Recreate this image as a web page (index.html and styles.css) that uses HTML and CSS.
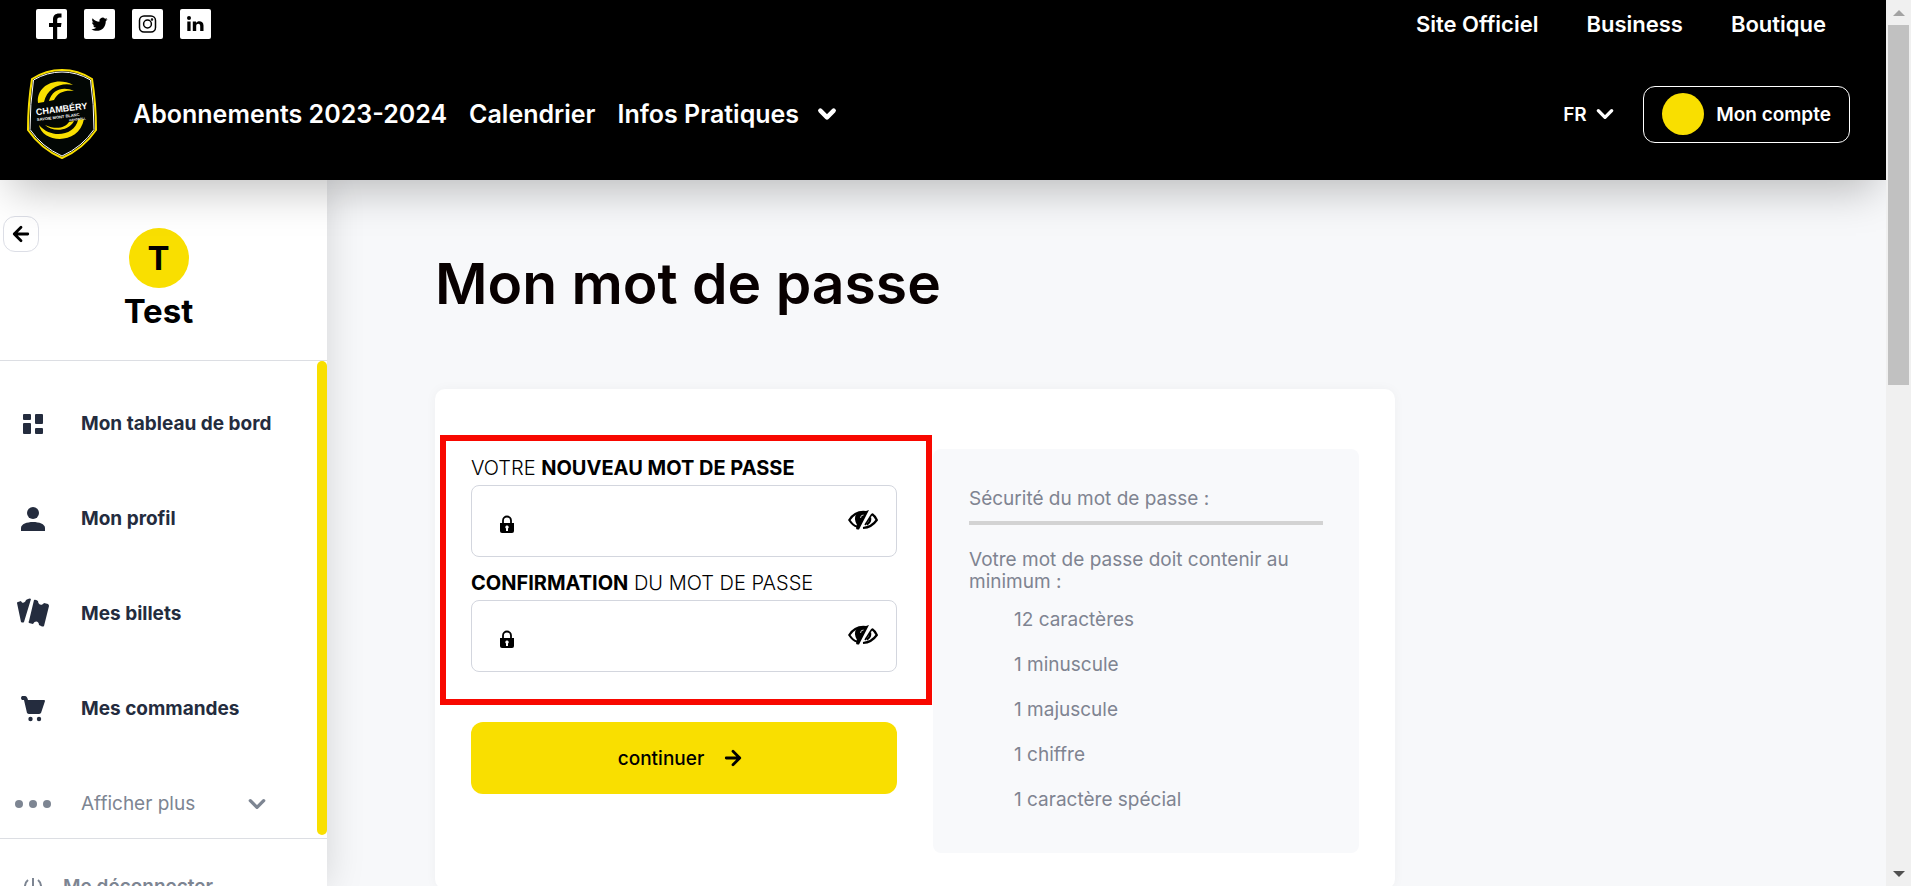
FILE: index.html
```html
<!DOCTYPE html>
<html lang="fr">
<head>
  <meta charset="UTF-8">
  <meta name="viewport" content="width=device-width, initial-scale=1">
  <title>Mon mot de passe</title>
  <link rel="stylesheet" href="styles.css">
</head>
<body>
  <div class="page">

    <!-- Header -->
    <header class="header">
      <div class="topbar">
        <div class="socials">
          <a href="#" class="social" aria-label="Facebook">
            <svg viewBox="0 0 31 30"><path d="M17 30V18h-4v-4h4v-3.500c0-4 2.300-6 6-6h2.500v4H23.500c-1.800 0-2.300 1-2.300 2.500v3h4.300l-.6 4h-3.700v12z"/></svg>
          </a>
          <a href="#" class="social" aria-label="Twitter">
            <svg viewBox="0 0 31 30"><path d="M23.600 10.200c-.6.300-1.200.4-1.900.5.700-.4 1.200-1 1.400-1.800-.6.400-1.300.6-2.100.8a3.300 3.300 0 0 0-5.600 3c-2.700-.1-5.200-1.500-6.800-3.500-.9 1.500-.4 3.400 1 4.400-.5 0-1-.2-1.500-.4 0 1.600 1.100 2.900 2.600 3.300-.5.100-1 .1-1.500 0 .4 1.300 1.600 2.300 3.100 2.300a6.600 6.600 0 0 1-4.900 1.400c5.800 3.700 14.400.9 14.400-8.300.7-.5 1.300-1 1.800-1.700z"/></svg>
          </a>
          <a href="#" class="social" aria-label="Instagram">
            <svg viewBox="0 0 31 30" fill="none" stroke="#000" stroke-width="1.500"><rect x="7.500" y="7" width="16" height="16" rx="4.500"/><circle cx="15.500" cy="15" r="3.900"/><circle cx="20" cy="10.600" r=".5"/></svg>
          </a>
          <a href="#" class="social" aria-label="LinkedIn">
            <svg viewBox="0 0 31 30"><circle cx="9" cy="9" r="2"/><path d="M7.300 12.500h3.300V22H7.300zM12.800 12.500H16v1.400c1.500-2.500 7.500-2.600 7.500 2.600V22h-3.300v-5c0-3-4-2.900-4 0v5h-3.400z"/></svg>
          </a>
        </div>
        <nav class="toplinks">
          <a href="#">Site Officiel</a>
          <a href="#">Business</a>
          <a href="#">Boutique</a>
        </nav>
      </div>

      <div class="navbar">
        <a href="#" class="logo" aria-label="Chambéry Savoie Mont Blanc Handball">
          <svg viewBox="0 0 70 90">
            <path d="M35 1Q51 1 65 10Q69 35 69 61Q56 80 35 89Q14 80 1 61Q1 35 5 10Q19 1 35 1z" fill="#020604" stroke="#f9df00" stroke-width="2"/>
            <path d="M35 3Q50 3 63.500 11Q67 35 67 60.500Q55 78 35 87Q15 78 3 60.500Q3 35 6.500 11Q20 3 35 3z" fill="none" stroke="#fff" stroke-width="1"/>
            <path d="M11 34C9 17 29 7 46 16C34 13 20 19 17 33zM22 32C25 20 37 17 47 22C38 21 31 23 27 31zM12 56C15 74 52 77 57 50L51 51C48 66 25 71 12 56zM18 56C25 63 41 63 47 52L42 53C38 59 29 61 18 56z" fill="#f9df00"/>
            <g transform="rotate(-7 35 42)" fill="#fff" class="logo-text">
              <text x="9" y="43" class="logo-name">CHAMBÉRY</text>
              <text x="9" y="49" class="logo-sub">SAVOIE MONT BLANC</text>
              <text x="41" y="53" class="logo-sport">HANDBALL</text>
            </g>
          </svg>
        </a>
        <nav class="mainnav">
          <a href="#">Abonnements 2023-2024</a>
          <a href="#">Calendrier</a>
          <button type="button" class="nav-drop">
            Infos Pratiques
            <svg class="chevron" viewBox="0 0 18 12"><path d="M3 3l6 6 6-6"/></svg>
          </button>
        </nav>
        <div class="lang">
          <select aria-label="Langue">
            <option>FR</option>
            <option>EN</option>
          </select>
          <svg class="chevron" viewBox="0 0 18 12"><path d="M3 3l6 6 6-6"/></svg>
        </div>
        <button type="button" class="account"><span class="dot"></span>Mon compte</button>
      </div>
    </header>

    <div class="content">

      <!-- Sidebar -->
      <aside class="sidebar">
        <div class="profile">
          <button type="button" class="back" aria-label="Réduire le menu">
            <svg viewBox="0 0 16 16"><path d="M14 8H2M8 2L2 8l6 6"/></svg>
          </button>
          <div class="avatar">T</div>
          <div class="username">Test</div>
        </div>

        <nav class="menu">
          <a href="#">
            <svg viewBox="0 0 36 36"><rect x="8" y="8" width="8" height="6" rx="1"/><rect x="8" y="17" width="8" height="11" rx="1"/><rect x="20" y="8" width="8" height="10" rx="1"/><rect x="20" y="22" width="8" height="6" rx="1"/></svg>
            Mon tableau de bord
          </a>
          <a href="#">
            <svg viewBox="0 0 36 36"><circle cx="18" cy="12" r="6"/><path d="M6 30v-3c0-8 24-8 24 0v3z"/></svg>
            Mon profil
          </a>
          <a href="#">
            <svg viewBox="0 0 36 36"><path d="M2 7q0-1 1-1l3-1c1 3 4 2 5-1l2-1q2-1 3 0L9 26q-1 1-3 0zM19 4q1-1 4 1c0 4 4 5 6 2l4 1q1 1 1 2l-5 20q-1 1-3 0l-2-1c0-4-4-5-6-1l-4-1q-1-1 0-2z"/></svg>
            Mes billets
          </a>
          <a href="#">
            <svg viewBox="0 0 36 36"><path d="M7 5h3q2 0 3 4h16q1 0 1 1l-4 12q-1 1-2 1H14q-1 0-2-1L9 9H7q-2-2 0-4z"/><circle cx="15.500" cy="28" r="2.200"/><circle cx="24" cy="28" r="2.200"/></svg>
            Mes commandes
          </a>
          <button type="button" class="more">
            <svg viewBox="0 0 36 36"><circle cx="4" cy="18" r="4"/><circle cx="18" cy="18" r="4"/><circle cx="32" cy="18" r="4"/></svg>
            Afficher plus
            <svg class="chevron" viewBox="0 0 18 12"><path d="M3 3l6 6 6-6"/></svg>
          </button>
        </nav>

        <a href="#" class="logout">
          <svg viewBox="0 0 20 20"><path d="M10 1v9M5 3a8 8 0 1 0 10 0"/></svg>
          Me déconnecter
        </a>
      </aside>

      <!-- Password form -->
      <main class="main">
        <h1>Mon mot de passe</h1>

        <form class="card">
          <div class="form-side">
            <div class="fields">
              <label for="password">VOTRE <b>NOUVEAU MOT DE PASSE</b></label>
              <div class="field">
                <svg class="lock" viewBox="0 0 16 18"><path d="M4 9V5.500a4 4 0 0 1 8 0V9" fill="none" stroke="#000" stroke-width="1.800"/><path d="M1 8h14v8q0 2-2 2H3q-2 0-2-2z"/><path d="M8 10.500a1.700 1.700 0 0 1 1 3.100V16H7v-2.400a1.700 1.700 0 0 1 1-3.100z" fill="#fff"/></svg>
                <input type="password" id="password">
                <button type="button" class="eye" aria-label="Afficher le mot de passe">
                  <svg viewBox="0 0 30 20"><path d="M18 2C10 1 5 4 1.300 10C3.500 13.500 6 16 9 16.500" fill="none" stroke="#000" stroke-width="2.200"/><path d="M21 0L11 19.500Q8 20 8 18L9 15Q5 8 9 3L18 1z"/><path d="M12.500 8q0-3 3-3" fill="none" stroke="#fff" stroke-width=".8"/><path d="M24 4q3 2 4.800 6C25 15.500 21 17.500 15 18M22 7.500q1 4.500-3.500 7" fill="none" stroke="#000" stroke-width="2.200"/><path d="M24 4l-7 11" stroke="#000" stroke-width="1.500"/></svg>
                </button>
              </div>
              <label for="confirm"><b>CONFIRMATION</b> DU MOT DE PASSE</label>
              <div class="field">
                <svg class="lock" viewBox="0 0 16 18"><path d="M4 9V5.500a4 4 0 0 1 8 0V9" fill="none" stroke="#000" stroke-width="1.800"/><path d="M1 8h14v8q0 2-2 2H3q-2 0-2-2z"/><path d="M8 10.500a1.700 1.700 0 0 1 1 3.100V16H7v-2.400a1.700 1.700 0 0 1 1-3.100z" fill="#fff"/></svg>
                <input type="password" id="confirm">
                <button type="button" class="eye" aria-label="Afficher la confirmation">
                  <svg viewBox="0 0 30 20"><path d="M18 2C10 1 5 4 1.300 10C3.500 13.500 6 16 9 16.500" fill="none" stroke="#000" stroke-width="2.200"/><path d="M21 0L11 19.500Q8 20 8 18L9 15Q5 8 9 3L18 1z"/><path d="M12.500 8q0-3 3-3" fill="none" stroke="#fff" stroke-width=".8"/><path d="M24 4q3 2 4.800 6C25 15.500 21 17.500 15 18M22 7.500q1 4.500-3.500 7" fill="none" stroke="#000" stroke-width="2.200"/><path d="M24 4l-7 11" stroke="#000" stroke-width="1.500"/></svg>
                </button>
              </div>
              <div class="highlight"></div>
            </div>
            <button type="submit" class="submit">
              continuer
              <svg viewBox="0 0 16 16"><path d="M2 8h12M8 2l6 6-6 6"/></svg>
            </button>
          </div>

          <div class="rules">
            <p>Sécurité du mot de passe :</p>
            <div class="strength"></div>
            <p>Votre mot de passe doit contenir au minimum :</p>
            <ul>
              <li>12 caractères</li>
              <li>1 minuscule</li>
              <li>1 majuscule</li>
              <li>1 chiffre</li>
              <li>1 caractère spécial</li>
            </ul>
          </div>
        </form>
      </main>
    </div>
  </div>

  <!-- Scrollbar -->
  <div class="scrollbar">
    <svg class="up" viewBox="0 0 12 6"><path d="M0 6l6-6 6 6z"/></svg>
    <div class="track"><div class="thumb"></div></div>
    <svg class="down" viewBox="0 0 12 6"><path d="M0 0l6 6 6-6z"/></svg>
  </div>
</body>
</html>
```
FILE: styles.css
```css
* {
  box-sizing: border-box;
}

body {
  margin: 0;
  height: 100vh;
  overflow: hidden;
  display: flex;
  background-color: #f7f8fa;
  color: #000;
  font-family: Inter, sans-serif;
  font-size: 19px;
}

a {
  color: inherit;
  text-decoration: none;
}

button,
select,
input {
  font: inherit;
  color: inherit;
  background: none;
  border: none;
  padding: 0;
}

button {
  cursor: pointer;
}

.page {
  flex: 1;
  min-width: 0;
  display: flex;
  flex-direction: column;
  overflow: hidden;
}

.chevron {
  width: 20px;
  height: 14px;
  fill: none;
  stroke: currentColor;
  stroke-width: 3;
  stroke-linecap: round;
  stroke-linejoin: round;
}

/* Header */
.header {
  position: relative;
  z-index: 2;
  flex: none;
  background-color: #000;
  color: #fff;
  font-weight: 600;
  box-shadow: 0 20px 40px -10px rgba(0, 0, 0, 0.25);
}

.topbar {
  display: flex;
  justify-content: space-between;
  align-items: center;
  height: 48px;
  padding: 0 60px 0 36px;
}

.socials {
  display: flex;
  gap: 17px;
}

.social {
  width: 31px;
  height: 30px;
  background-color: #fff;
  border-radius: 2px;
}

.social svg {
  display: block;
}

.toplinks {
  display: flex;
  gap: 48px;
  font-size: 22px;
}

.navbar {
  display: flex;
  align-items: center;
  height: 132px;
  padding: 0 36px 0 27px;
}

.logo svg {
  display: block;
  width: 70px;
  height: 90px;
}

.logo-text {
  font-family: "Liberation Sans", sans-serif;
  font-weight: bold;
}

.logo-name {
  font-size: 9px;
}

.logo-sub {
  font-size: 4px;
}

.logo-sport {
  font-size: 3px;
}

.mainnav {
  flex: 1;
  display: flex;
  align-items: center;
  gap: 22px;
  margin-left: 36px;
  font-size: 25px;
}

.nav-drop {
  display: flex;
  align-items: center;
  gap: 18px;
}

.nav-drop .chevron {
  stroke-width: 4;
}

.lang {
  display: flex;
  align-items: center;
  gap: 8px;
  margin-right: 28px;
}

.lang select {
  appearance: none;
  width: 24px;
}

.lang option {
  color: #000;
}

.account {
  display: flex;
  align-items: center;
  gap: 12px;
  height: 57px;
  padding: 0 18px;
  border: 1px solid #fff;
  border-radius: 12px;
}

.dot {
  width: 42px;
  height: 42px;
  border-radius: 50%;
  background-color: #f9df00;
}

/* Sidebar */
.content {
  flex: 1;
  min-height: 0;
  display: flex;
}

.sidebar {
  position: relative;
  z-index: 1;
  flex: none;
  width: 327px;
  background-color: #fff;
  box-shadow: 0 0 36px rgba(0, 0, 0, 0.15);
}

.profile {
  position: relative;
  display: flex;
  flex-direction: column;
  align-items: center;
  height: 181px;
  padding: 48px 10px 0 0;
  border-bottom: 1px solid #dcdee3;
}

.back {
  position: absolute;
  top: 36px;
  left: 3px;
  display: flex;
  align-items: center;
  justify-content: center;
  width: 36px;
  height: 36px;
  border: 1px solid #dcdee6;
  border-radius: 12px;
}

.back svg,
.submit svg {
  width: 18px;
  height: 18px;
  fill: none;
  stroke: #000;
  stroke-width: 2.500;
  stroke-linecap: round;
  stroke-linejoin: round;
}

.avatar {
  width: 60px;
  height: 60px;
  border-radius: 50%;
  background-color: #f9df00;
  font-size: 33px;
  font-weight: 700;
  line-height: 60px;
  text-align: center;
}

.username {
  font-size: 33px;
  font-weight: 700;
  line-height: 46px;
}

.menu {
  position: relative;
  display: flex;
  flex-direction: column;
  height: 478px;
  padding: 15px 10px 0 0;
  border-bottom: 1px solid #dcdee3;
}

/* yellow scroll indicator of the menu */
.menu::after {
  content: "";
  position: absolute;
  top: 0;
  right: 0;
  bottom: 3px;
  width: 10px;
  border-radius: 5px;
  background-color: #f9df00;
}

.menu a,
.more {
  flex: none;
  display: flex;
  align-items: center;
  gap: 30px;
  height: 95px;
  padding-left: 15px;
  color: #242c3e;
  font-weight: 700;
}

.menu svg {
  width: 36px;
  height: 36px;
  fill: currentColor;
}

.menu .more {
  color: #7d8592;
  font-weight: 400;
}

.menu .more .chevron {
  width: 20px;
  height: 14px;
  margin-left: auto;
  margin-right: 50px;
  fill: none;
}

.logout {
  display: flex;
  align-items: center;
  gap: 20px;
  padding: 36px 0 0 23px;
  color: #7d8592;
  font-weight: 600;
}

.logout svg {
  width: 20px;
  height: 20px;
  fill: none;
  stroke: currentColor;
  stroke-width: 2;
}

/* Main */
.main {
  flex: 1;
  min-width: 0;
  padding: 66px 36px 0 108px;
}

h1 {
  margin: 0 0 67px;
  color: #080000;
  font-size: 57px;
  font-weight: 600;
  line-height: 76px;
}

.card {
  display: grid;
  grid-template-columns: minmax(0, 1fr) minmax(0, 1fr);
  gap: 36px;
  max-width: 960px;
  padding: 60px 36px 36px;
  border-radius: 10px;
  background-color: #fff;
  box-shadow: 0 0 12px rgba(0, 0, 0, 0.04);
}

.fields {
  position: relative;
  display: flex;
  flex-direction: column;
}

.fields label {
  padding: 5px 0 3px;
  font-size: 20px;
  font-weight: 300;
  line-height: 28px;
}

.fields b {
  font-weight: 700;
}

.field {
  display: flex;
  align-items: center;
  gap: 20px;
  height: 72px;
  margin-bottom: 7px;
  padding: 0 18px 0 27px;
  border: 1px solid #d3d6de;
  border-radius: 8px;
}

.field .lock {
  width: 16px;
  height: 18px;
  margin-top: 6px;
}

.field input {
  flex: 1;
  min-width: 0;
  height: 100%;
  outline: none;
}

.eye svg {
  display: block;
  width: 30px;
  height: 20px;
  margin-bottom: 3px;
}

/* frame drawn over the two fields */
.highlight {
  position: absolute;
  top: -14px;
  right: -35px;
  bottom: -26px;
  left: -31px;
  border: 6px solid #f80800;
  pointer-events: none;
}

.submit {
  display: flex;
  align-items: center;
  justify-content: center;
  gap: 20px;
  width: 100%;
  height: 72px;
  margin-top: 43px;
  padding-right: 8px;
  border-radius: 12px;
  background-color: #f9df00;
  font-weight: 500;
}

.rules {
  padding: 39px 36px 31px;
  border-radius: 8px;
  background-color: #f8f9fb;
  color: #7f8491;
  line-height: 22px;
}

.rules p {
  margin: 0;
}

.strength {
  height: 4px;
  margin: 11px 0 24px;
  background-color: #d3d3d3;
}

.rules ul {
  margin: 4px 0 0;
  padding-left: 45px;
  list-style: none;
}

.rules li {
  line-height: 45px;
}

/* Scrollbar */
.scrollbar {
  flex: none;
  display: flex;
  flex-direction: column;
  align-items: center;
  gap: 9px;
  width: 25px;
  padding: 10px 0 9px;
  background-color: #f0f0f0;
}

.scrollbar svg {
  flex: none;
  width: 12px;
  height: 6px;
}

.up {
  fill: #a3a3a3;
}

.down {
  fill: #505050;
}

.track {
  flex: 1;
}

.thumb {
  width: 21px;
  height: 43%;
  background-color: #c1c1c1;
}
```
